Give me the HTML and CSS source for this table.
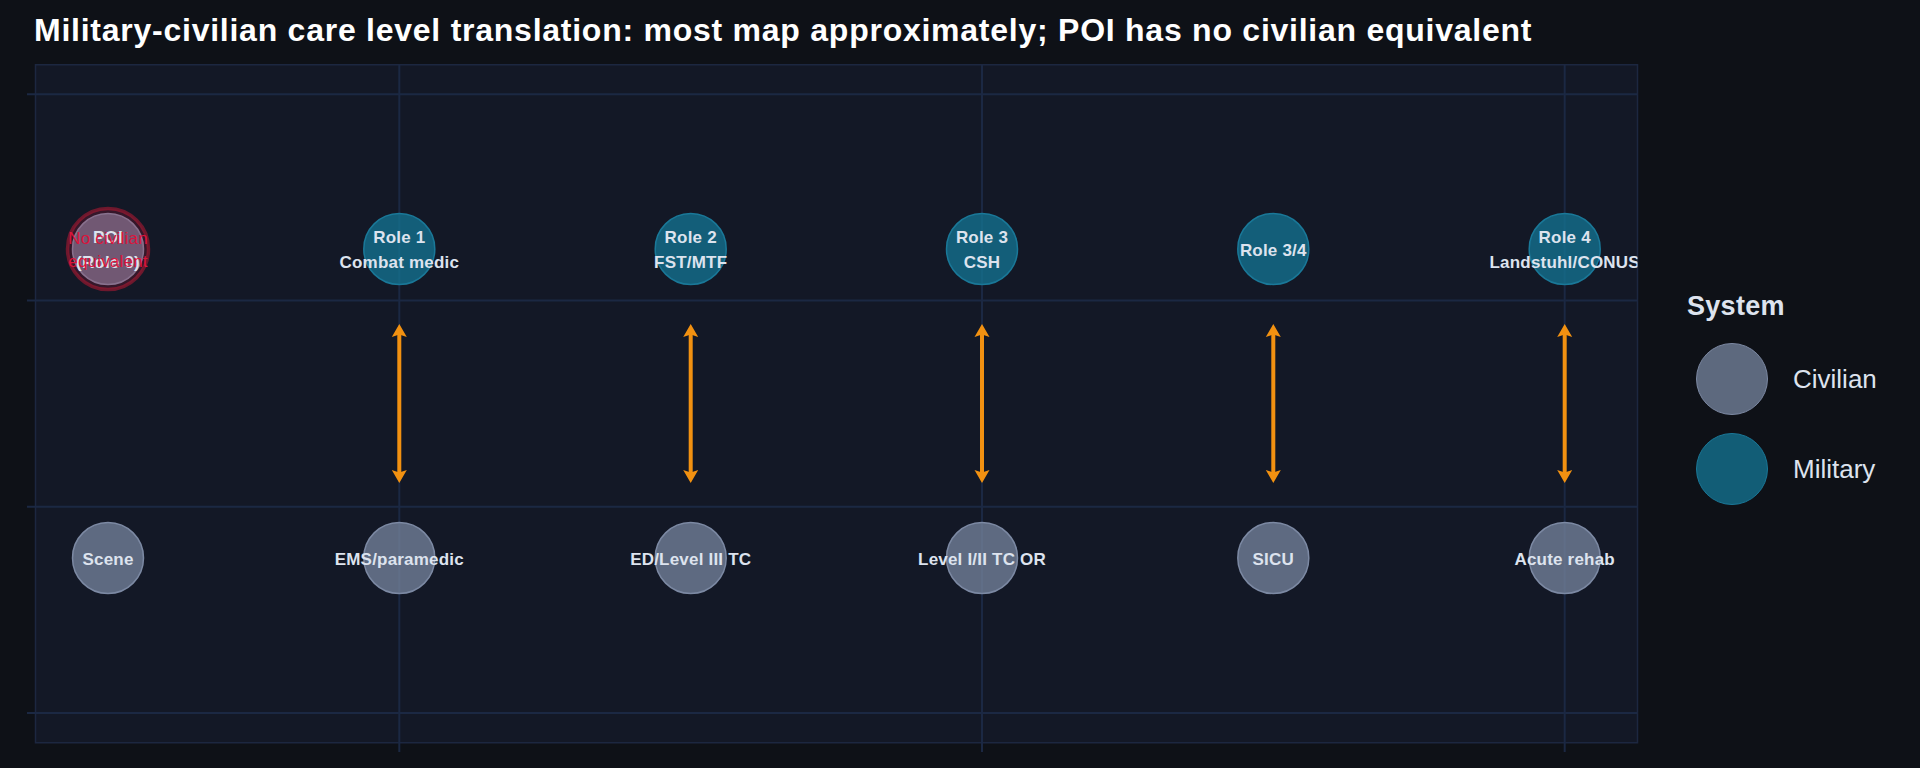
FILE: index.html
```html
<!DOCTYPE html>
<html lang="en">
<head>
<meta charset="utf-8">
<title>Military-civilian care level translation</title>
<link rel="stylesheet" href="styles.css">
</head>
<body>
<h1 class="title">Military-civilian care level translation: most map approximately; POI has no civilian equivalent</h1>
<div class="main">
  <svg class="chart" width="1650" height="704" viewBox="0 0 1650 704" xmlns="http://www.w3.org/2000/svg">
    <defs>
      <clipPath id="plotclip"><rect x="35" y="0" width="1602.5" height="679"/></clipPath>
    </defs>
    <rect class="plot-bg" x="35.5" y="0.75" width="1602" height="678"/>
    <g class="grid">
      <line x1="27" y1="30.3" x2="1637" y2="30.3"/>
      <line x1="27" y1="236.5" x2="1637" y2="236.5"/>
      <line x1="27" y1="442.7" x2="1637" y2="442.7"/>
      <line x1="27" y1="649" x2="1637" y2="649"/>
      <line x1="399.3" y1="1" x2="399.3" y2="688"/>
      <line x1="982" y1="1" x2="982" y2="688"/>
      <line x1="1564.7" y1="1" x2="1564.7" y2="688"/>
    </g>
    <g class="arrows">
      <g transform="translate(399.3 0)"><line x1="0" y1="268" x2="0" y2="411"/><path d="M0 260 L7.5 273 L0 270.5 L-7.5 273 Z"/><path d="M0 419 L7.5 406 L0 408.5 L-7.5 406 Z"/></g>
      <g transform="translate(690.7 0)"><line x1="0" y1="268" x2="0" y2="411"/><path d="M0 260 L7.5 273 L0 270.5 L-7.5 273 Z"/><path d="M0 419 L7.5 406 L0 408.5 L-7.5 406 Z"/></g>
      <g transform="translate(982 0)"><line x1="0" y1="268" x2="0" y2="411"/><path d="M0 260 L7.5 273 L0 270.5 L-7.5 273 Z"/><path d="M0 419 L7.5 406 L0 408.5 L-7.5 406 Z"/></g>
      <g transform="translate(1273.3 0)"><line x1="0" y1="268" x2="0" y2="411"/><path d="M0 260 L7.5 273 L0 270.5 L-7.5 273 Z"/><path d="M0 419 L7.5 406 L0 408.5 L-7.5 406 Z"/></g>
      <g transform="translate(1564.7 0)"><line x1="0" y1="268" x2="0" y2="411"/><path d="M0 260 L7.5 273 L0 270.5 L-7.5 273 Z"/><path d="M0 419 L7.5 406 L0 408.5 L-7.5 406 Z"/></g>
    </g>
    <g class="nodes-civ">
      <circle cx="108" cy="185" r="35.5"/>
      <circle cx="108" cy="494" r="35.5"/>
      <circle cx="399.3" cy="494" r="35.5"/>
      <circle cx="690.7" cy="494" r="35.5"/>
      <circle cx="982" cy="494" r="35.5"/>
      <circle cx="1273.3" cy="494" r="35.5"/>
      <circle cx="1564.7" cy="494" r="35.5"/>
    </g>
    <g class="nodes-mil">
      <circle cx="399.3" cy="185" r="35.5"/>
      <circle cx="690.7" cy="185" r="35.5"/>
      <circle cx="982" cy="185" r="35.5"/>
      <circle cx="1273.3" cy="185" r="35.5"/>
      <circle cx="1564.7" cy="185" r="35.5"/>
    </g>
    <circle class="poi-ring" cx="108" cy="185" r="40.5"/>
    <g class="labels" clip-path="url(#plotclip)">
      <text x="108" y="179">POI</text>
      <text x="108" y="204">(Role 0)</text>
      <text x="399.3" y="178.7">Role 1</text>
      <text x="399.3" y="203.7">Combat medic</text>
      <text x="690.7" y="178.7">Role 2</text>
      <text x="690.7" y="203.7">FST/MTF</text>
      <text x="982" y="178.7">Role 3</text>
      <text x="982" y="203.7">CSH</text>
      <text x="1273.3" y="192">Role 3/4</text>
      <text x="1564.7" y="178.7">Role 4</text>
      <text x="1564.7" y="203.7">Landstuhl/CONUS</text>
      <text x="108" y="501">Scene</text>
      <text x="399.3" y="501">EMS/paramedic</text>
      <text x="690.7" y="501">ED/Level III TC</text>
      <text x="982" y="501">Level I/II TC OR</text>
      <text x="1273.3" y="501">SICU</text>
      <text x="1564.7" y="501">Acute rehab</text>
      <text class="warn" x="108" y="180">No civilian</text>
      <text class="warn" x="108" y="202.5">equivalent</text>
    </g>
  </svg>
  <div class="legend">
    <div class="legend-title">System</div>
    <div class="legend-item">
      <span class="swatch swatch-civ"></span>
      <span class="legend-label">Civilian</span>
    </div>
    <div class="legend-item">
      <span class="swatch swatch-mil"></span>
      <span class="legend-label">Military</span>
    </div>
  </div>
</div>
</body>
</html>
```

FILE: styles.css
```css
html, body {
  margin: 0;
  padding: 0;
  background: #0e1117;
  width: 1920px;
  height: 768px;
  overflow: hidden;
  font-family: "Liberation Sans", Arial, sans-serif;
}

.title {
  margin: 0;
  padding: 10px 0 14px 34px;
  height: 40px;
  line-height: 40px;
  font-size: 32px;
  letter-spacing: 0.75px;
  font-weight: bold;
  color: #ffffff;
  white-space: nowrap;
}

.main {
  display: flex;
  align-items: flex-start;
}

.chart {
  display: block;
  flex: none;
}

.plot-bg {
  fill: #131826;
  stroke: #1c2740;
  stroke-width: 1.5;
}

.grid line {
  stroke: #1b2843;
  stroke-width: 2;
}

.arrows line {
  stroke: #f29111;
  stroke-width: 4;
}

.arrows path {
  fill: #f29111;
}

.nodes-civ circle {
  fill: rgba(114, 128, 153, 0.8);
  stroke: #7c89a3;
  stroke-width: 1.5;
}

.nodes-mil circle {
  fill: rgba(20, 112, 143, 0.8);
  stroke: #1a7898;
  stroke-width: 1.5;
}

.poi-ring {
  fill: rgba(190, 20, 60, 0.2);
  stroke: rgba(170, 25, 50, 0.6);
  stroke-width: 3.5;
}

.labels text {
  font-family: "Liberation Sans", Arial, sans-serif;
  font-size: 17px;
  letter-spacing: 0.2px;
  font-weight: bold;
  fill: #dde3ee;
  text-anchor: middle;
}

.labels text.warn {
  font-weight: normal;
  fill: #dc143c;
}

.legend {
  padding: 227px 0 0 37px;
  display: flex;
  flex-direction: column;
}

.legend-title {
  font-size: 27px;
  line-height: 30px;
  letter-spacing: 0.3px;
  font-weight: bold;
  color: #dde3ee;
}

.legend-item {
  display: flex;
  align-items: center;
  height: 90px;
  padding-left: 9px;
}

.legend-title + .legend-item {
  margin-top: 13px;
}

.swatch {
  width: 70px;
  height: 70px;
  border-radius: 50%;
  border: 1.5px solid;
  flex: none;
}

.swatch-civ {
  background: rgba(114, 128, 153, 0.8);
  border-color: #7c89a3;
}

.swatch-mil {
  background: rgba(20, 112, 143, 0.8);
  border-color: #1a7898;
}

.legend-label {
  margin-left: 25px;
  font-size: 26px;
  line-height: 30px;
  color: #dde3ee;
}
```
